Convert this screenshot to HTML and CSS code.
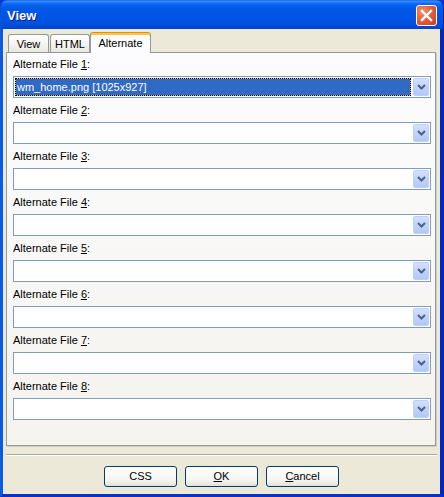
FILE: index.html
```html
<!DOCTYPE html>
<html>
<head>
<meta charset="utf-8">
<link rel="stylesheet" href="styles.css">
</head>
<body>
<div class="window">
  <div class="titlebar">
    <span class="title">View</span>
    <div class="close"><svg width="19" height="19" viewBox="0 0 19 19"><path d="M5 5 L14 14 M14 5 L5 14" stroke="#fff" stroke-width="2.4" stroke-linecap="square"/></svg></div>
  </div>
  <div class="frame">
    <div class="tabs">
      <div class="tab t-view">View</div>
      <div class="tab t-html">HTML</div>
      <div class="tab t-alt active">Alternate</div>
    </div>
    <div class="panel">
      <div class="field">
        <div class="label">Alternate File <u>1</u>:</div>
        <div class="combo"><div class="value selected">wm_home.png [1025x927]</div><div class="drop"><svg width="9" height="6" viewBox="0 0 9 6"><polyline points="1,1 4.5,4.5 8,1" fill="none" stroke="#4d6185" stroke-width="2"/></svg></div></div>
      </div>
      <div class="field">
        <div class="label">Alternate File <u>2</u>:</div>
        <div class="combo"><div class="value"></div><div class="drop"><svg width="9" height="6" viewBox="0 0 9 6"><polyline points="1,1 4.5,4.5 8,1" fill="none" stroke="#4d6185" stroke-width="2"/></svg></div></div>
      </div>
      <div class="field">
        <div class="label">Alternate File <u>3</u>:</div>
        <div class="combo"><div class="value"></div><div class="drop"><svg width="9" height="6" viewBox="0 0 9 6"><polyline points="1,1 4.5,4.5 8,1" fill="none" stroke="#4d6185" stroke-width="2"/></svg></div></div>
      </div>
      <div class="field">
        <div class="label">Alternate File <u>4</u>:</div>
        <div class="combo"><div class="value"></div><div class="drop"><svg width="9" height="6" viewBox="0 0 9 6"><polyline points="1,1 4.5,4.5 8,1" fill="none" stroke="#4d6185" stroke-width="2"/></svg></div></div>
      </div>
      <div class="field">
        <div class="label">Alternate File <u>5</u>:</div>
        <div class="combo"><div class="value"></div><div class="drop"><svg width="9" height="6" viewBox="0 0 9 6"><polyline points="1,1 4.5,4.5 8,1" fill="none" stroke="#4d6185" stroke-width="2"/></svg></div></div>
      </div>
      <div class="field">
        <div class="label">Alternate File <u>6</u>:</div>
        <div class="combo"><div class="value"></div><div class="drop"><svg width="9" height="6" viewBox="0 0 9 6"><polyline points="1,1 4.5,4.5 8,1" fill="none" stroke="#4d6185" stroke-width="2"/></svg></div></div>
      </div>
      <div class="field">
        <div class="label">Alternate File <u>7</u>:</div>
        <div class="combo"><div class="value"></div><div class="drop"><svg width="9" height="6" viewBox="0 0 9 6"><polyline points="1,1 4.5,4.5 8,1" fill="none" stroke="#4d6185" stroke-width="2"/></svg></div></div>
      </div>
      <div class="field">
        <div class="label">Alternate File <u>8</u>:</div>
        <div class="combo"><div class="value"></div><div class="drop"><svg width="9" height="6" viewBox="0 0 9 6"><polyline points="1,1 4.5,4.5 8,1" fill="none" stroke="#4d6185" stroke-width="2"/></svg></div></div>
      </div>
    </div>
    <div class="sep"></div>
    <div class="buttons">
      <div class="btn">CSS</div>
      <div class="btn"><u>O</u>K</div>
      <div class="btn"><u>C</u>ancel</div>
    </div>
  </div>
</div>
</body>
</html>
```

FILE: styles.css
```css
* { box-sizing: border-box; }
html, body { margin: 0; padding: 0; background: #fff; }
body {
  font-family: "Liberation Sans", "DejaVu Sans", sans-serif;
  font-size: 11px;
  color: #000;
}
.window {
  width: 444px;
  height: 497px;
  display: flex;
  flex-direction: column;
  background: #0831d9;
}
.titlebar {
  height: 29px;
  flex: none;
  display: flex;
  align-items: flex-start;
  justify-content: space-between;
  padding: 5px 7px 0 7px;
  border-radius: 7px 7px 0 0;
  background: linear-gradient(#0a5ae8 0, #3d8ffd 1px, #2a7ef8 2px, #0a68f2 4px, #0259e8 8px, #0055e5 14px, #0053e2 22px, #004bd8 26px, #0042cc 29px);
  box-shadow: inset 1px 0 0 #0a4fd8, inset -1px 0 0 #00229c;
}
.title {
  font-family: "Liberation Sans", "DejaVu Sans", sans-serif;
  font-weight: bold;
  font-size: 13px;
  line-height: 21px;
  color: #fff;
  text-shadow: 1px 1px 0 #0a1883;
}
.close {
  width: 21px;
  height: 21px;
  border: 1px solid #fff;
  border-radius: 3px;
  background: radial-gradient(circle at 30% 30%, #f2916f 0, #e2603f 45%, #c9401c 100%);
  display: flex;
  align-items: center;
  justify-content: center;
}
.close svg { display: block; }
.frame {
  flex: 1;
  display: flex;
  flex-direction: column;
  background: #ece9d8;
  border-left: 3px solid #0b5ae6;
  border-right: 4px solid #0626b8;
  border-bottom: 3px solid #0733c8;
  padding: 3px 4px 7px 3px;
}
.tabs {
  height: 21px;
  display: flex;
  align-items: flex-end;
  padding-left: 2px;
  margin-bottom: -1px;
  position: relative;
  z-index: 1;
}
.tab {
  height: 18px;
  margin-bottom: 1px;
  border: 1px solid #919b9c;
  border-bottom: none;
  border-radius: 3px 3px 0 0;
  background: linear-gradient(#fff, #f3f3ef 60%, #e8e6dc);
  display: flex;
  align-items: center;
  justify-content: center;
  padding-top: 2px;
  line-height: 13px;
}
.t-view { width: 41px; margin-right: 1px; }
.t-html { width: 40px; }
.t-alt { width: 61px; }
.tab.active {
  height: 21px;
  margin-bottom: 0;
  background: #fcfcfe;
  border-top: 1px solid #e68b2c;
  box-shadow: inset 0 2px 0 #ffc73c;
  padding-top: 1px;
}
.panel {
  height: 394px;
  flex: none;
  border: 1px solid #919b9c;
  background: linear-gradient(#fcfcfe, #f4f3ee);
  box-shadow: 1px 1px 0 #d0cdc1;
  padding: 5px 4px 0 6px;
}
.field { margin-bottom: 6px; }
.label {
  height: 13px;
  line-height: 13px;
  margin-bottom: 5px;
  white-space: nowrap;
}
.combo {
  height: 22px;
  border: 1px solid #7f9db9;
  background: #fff;
  padding: 1px;
  display: flex;
}
.value {
  flex: 1;
  margin-right: 2px;
  line-height: 16px;
  padding-left: 1px;
  border: 1px solid transparent;
  white-space: nowrap;
}
.value.selected {
  color: #fff;
  border: 1px dotted #000;
  background: linear-gradient(#316ac5, #316ac5) padding-box, #d8c070 border-box;
}
.drop {
  width: 16px;
  height: 18px;
  border: 1px solid #bcd0f6;
  border-radius: 2px;
  background: linear-gradient(#d3e0fd, #c1d3fb 50%, #b4c8f6);
  display: flex;
  align-items: center;
  justify-content: center;
}
.drop svg { display: block; }
.sep {
  height: 2px;
  margin-top: 8px;
  margin-right: -1px;
  border-top: 1px solid #aca899;
  border-bottom: 1px solid #fff;
  flex: none;
}
.buttons {
  margin-top: 10px;
  display: flex;
  justify-content: center;
  gap: 8px;
  padding-left: 1px;
}
.btn {
  width: 73px;
  height: 21px;
  border: 1px solid #003c74;
  border-radius: 3px;
  background: linear-gradient(#fff, #f5f4f0 70%, #e3e0d6);
  display: flex;
  align-items: center;
  justify-content: center;
  line-height: 13px;
}
```
